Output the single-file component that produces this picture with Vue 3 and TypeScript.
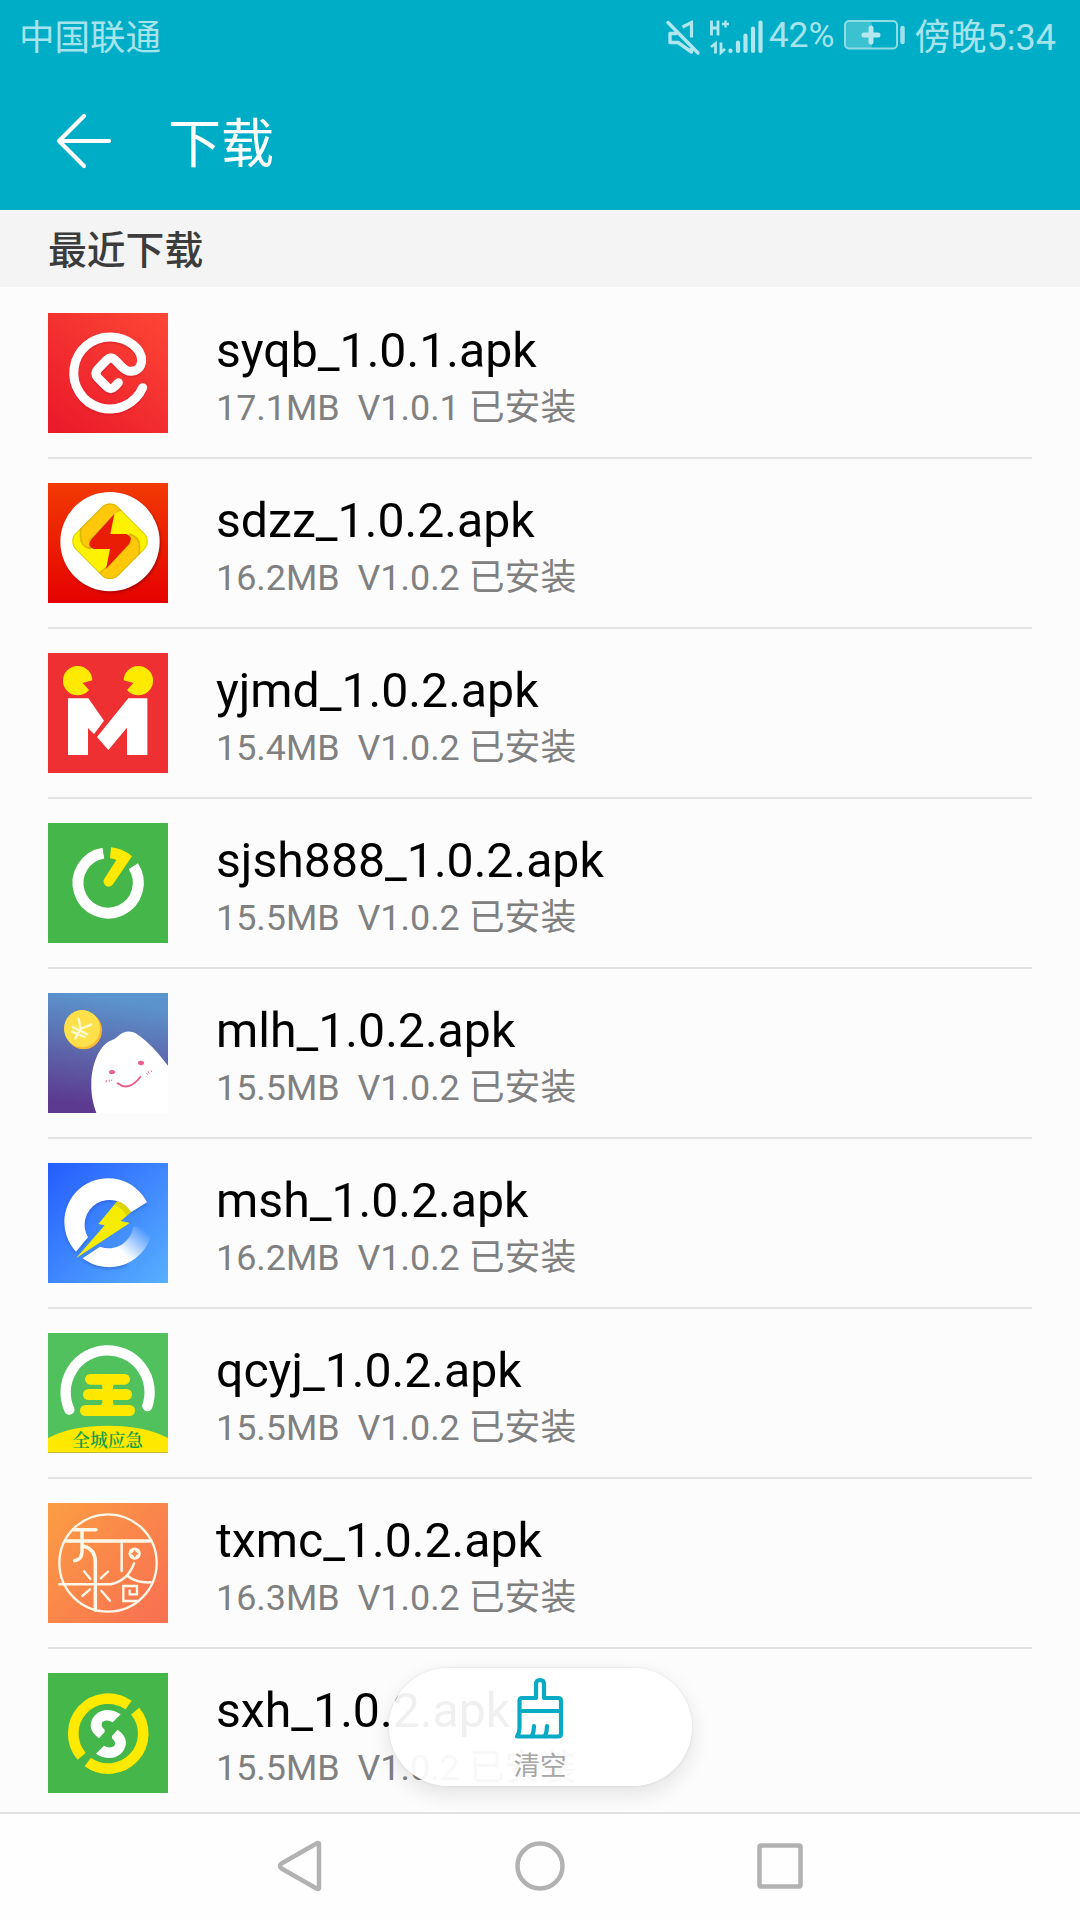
<script setup lang="ts">
interface Download {
  id: string
  name: string
  size: string
  version: string
}

const downloads: Download[] = [
  { id: 'syqb', name: 'syqb_1.0.1.apk', size: '17.1MB', version: 'V1.0.1' },
  { id: 'sdzz', name: 'sdzz_1.0.2.apk', size: '16.2MB', version: 'V1.0.2' },
  { id: 'yjmd', name: 'yjmd_1.0.2.apk', size: '15.4MB', version: 'V1.0.2' },
  { id: 'sjsh', name: 'sjsh888_1.0.2.apk', size: '15.5MB', version: 'V1.0.2' },
  { id: 'mlh', name: 'mlh_1.0.2.apk', size: '15.5MB', version: 'V1.0.2' },
  { id: 'msh', name: 'msh_1.0.2.apk', size: '16.2MB', version: 'V1.0.2' },
  { id: 'qcyj', name: 'qcyj_1.0.2.apk', size: '15.5MB', version: 'V1.0.2' },
  { id: 'txmc', name: 'txmc_1.0.2.apk', size: '16.3MB', version: 'V1.0.2' },
  { id: 'sxh', name: 'sxh_1.0.2.apk', size: '15.5MB', version: 'V1.0.2' },
]
</script>

<template>
  <div class="screen">
    <header class="top">
      <div class="status">
        <span class="carrier">中国联通</span>
        <div class="indicators">
          <svg class="signal" width="100" height="40" viewBox="0 0 100 40" fill="none" stroke="#b0e6ee">
            <path d="M3 5.500 L33 36" stroke-width="3.4" stroke-linecap="round" />
            <path d="M17.500 10 L26.500 5.500 V20.500" stroke-width="3.2" />
            <path d="M12 16.500 H5 V25.500 H13 L26.500 35 V31" stroke-width="3.400" stroke-linejoin="round" />
            <path d="M46.500 3.500 V18.500 M53 3.500 V18.500 M46.500 11 H53" stroke-width="2.800" />
            <path d="M57 7 H64 M60.500 3.500 V10.500" stroke-width="2.400" />
            <path d="M46 30 L50.500 26.500 V36.500 M56 25.500 V35.500 L60 32" stroke-width="2.800" />
            <path d="M65.500 33.500 V34 M73 25.500 V34 M80.500 18.500 V34 M88 11.500 V34 M95.500 5.500 V34" stroke-width="4.200" stroke-linecap="round" />
          </svg>
          <span class="percent">42%</span>
          <svg class="battery" width="64" height="32" viewBox="0 0 64 32" fill="none">
            <rect x="2" y="2.500" width="26" height="27" rx="3" fill="#3cc1d1" />
            <rect x="1" y="2" width="52" height="27.500" rx="4" stroke="#8edce6" stroke-width="2" />
            <path d="M27 9 V23 M20 16 H34" stroke="#b5e9ef" stroke-width="5" stroke-linecap="round" />
            <path d="M58.500 9 V23" stroke="#9fe1ea" stroke-width="4.500" stroke-linecap="round" />
          </svg>
          <span class="time">傍晚5:34</span>
        </div>
      </div>
      <div class="bar">
        <svg width="58" height="58" viewBox="0 0 58 58" fill="none" stroke="#fff" stroke-width="4.200" stroke-linecap="round" stroke-linejoin="round">
          <path d="M54 29 H4 M29 4 L4 29 L29 54" />
        </svg>
        <h1>下载</h1>
      </div>
    </header>

    <h2 class="section">最近下载</h2>

    <ul class="list">
      <li v-for="item in downloads" :key="item.id" class="row">
        <svg v-if="item.id === 'syqb'" class="app" viewBox="0 0 360 360">
          <defs>
            <linearGradient id="g-syqb" x1="0.1" y1="1" x2="0.900" y2="0">
              <stop offset="0" stop-color="#ea1a2a" />
              <stop offset="1" stop-color="#fc4535" />
            </linearGradient>
          </defs>
          <rect width="360" height="360" fill="url(#g-syqb)" />
          <g fill="none" stroke-linecap="round" stroke-linejoin="round" stroke-width="27">
            <path transform="translate(0 6)" opacity="0.25" stroke="#b81020" d="M284 224 A108 108 0 1 1 186 72 C242 72 282 110 281 143 C280 166 264 175 248 175 C233 175 226 166 217 157 L200 140 Q188 129 176 141 L150 168 Q138 180 149 194 L176 221 Q188 233 200 221 L211 209" />
            <path stroke="#fff" d="M284 224 A108 108 0 1 1 186 72 C242 72 282 110 281 143 C280 166 264 175 248 175 C233 175 226 166 217 157 L200 140 Q188 129 176 141 L150 168 Q138 180 149 194 L176 221 Q188 233 200 221 L211 209" />
          </g>
        </svg>

        <svg v-else-if="item.id === 'sdzz'" class="app" viewBox="0 0 360 360">
          <defs>
            <linearGradient id="g-sdzz" x1="0" y1="0" x2="0" y2="1">
              <stop offset="0" stop-color="#f23a04" />
              <stop offset="1" stop-color="#e50200" />
            </linearGradient>
            <clipPath id="c-sdzz"><rect x="96" y="85" width="180" height="180" rx="34" transform="rotate(45 186 175)" /></clipPath>
            <filter id="s-sdzz"><feGaussianBlur stdDeviation="4" /></filter>
          </defs>
          <rect width="360" height="360" fill="url(#g-sdzz)" />
          <circle cx="190" cy="181" r="148" fill="#7d0500" opacity="0.6" filter="url(#s-sdzz)" />
          <circle cx="186" cy="176" r="149" fill="#fff" />
          <g clip-path="url(#c-sdzz)">
            <rect x="60" y="50" width="250" height="250" fill="#fff200" />
            <path d="M230 72 Q208 88 200 96 L126 172 V197 Q92 190 98 146 L98 40 H200Z" fill="#ffc80a" stroke="#b59500" stroke-opacity="0.5" stroke-width="5" />
            <path transform="rotate(180 186 175.500)" d="M230 72 Q208 88 200 96 L126 172 V197 Q92 190 98 146 L98 40 H200Z" fill="#ffc80a" stroke="#b59500" stroke-opacity="0.5" stroke-width="5" />
            <path d="M200 92 L219 82 Q192 115 187 153 H190 Z" fill="#fff200" />
          </g>
          <rect x="97" y="86" width="178" height="178" rx="34" transform="rotate(45 186 175)" fill="none" stroke="#a99300" stroke-opacity="0.4" stroke-width="3" />
          <path d="M199 93 L187 153 H234 Q256 160 244 182 L174 258 L186 198 H137 Q116 190 129 170 Z" fill="#e91c06" />
        </svg>

        <svg v-else-if="item.id === 'yjmd'" class="app" viewBox="0 0 360 360">
          <rect width="360" height="360" fill="#ef3032" />
          <circle cx="89" cy="83" r="44" fill="#fee900" />
          <circle cx="271" cy="83" r="44" fill="#fee900" />
          <path d="M104 90 L136 81 V125 Z M256 90 L224 81 V125 Z" fill="#ef3032" />
          <path d="M60 136 H121 L168 203 L138 243 L120 225 V306 H60 Z M241 136 H298 V306 H237 V224 L181 291 L147 252 Z" fill="#fff" />
        </svg>

        <svg v-else-if="item.id === 'sjsh'" class="app" viewBox="0 0 360 360">
          <rect width="360" height="360" fill="#45b649" />
          <path d="M256 130 A90.500 90.500 0 1 1 166 90.500" fill="none" stroke="#fff" stroke-width="33" />
          <path d="M189 73 Q224 76 252 100 L195 184 A15.500 15.500 0 0 1 169 167 L205 111 Q196 107 186 106 Z" fill="#fee900" />
        </svg>

        <svg v-else-if="item.id === 'mlh'" class="app" viewBox="0 0 360 360">
          <defs>
            <linearGradient id="g-mlh" x1="0.55" y1="0" x2="0.4" y2="1">
              <stop offset="0.05" stop-color="#5b94cd" />
              <stop offset="0.5" stop-color="#5d68ab" />
              <stop offset="0.95" stop-color="#5c3a90" />
            </linearGradient>
          </defs>
          <rect width="360" height="360" fill="url(#g-mlh)" />
          <ellipse cx="107" cy="112" rx="55" ry="57" fill="#f8b934" />
          <ellipse cx="102" cy="107" rx="54" ry="56" fill="#fde04a" />
          <g fill="none" stroke="#fffad0" stroke-width="7" stroke-linecap="round">
            <path d="M92 78 L98 108 L82 136 M98 108 L130 94 M74 102 L118 124 M72 116 L110 132" />
          </g>
          <path d="M145 360 C133 325 129 300 130 268 C132 215 151 164 184 145 Q199 141 210 130 C224 115 247 111 265 122 C300 145 333 181 360 218 V360 Z" fill="#fff" />
          <ellipse cx="192" cy="237" rx="9" ry="6" fill="#ea5e8c" />
          <ellipse cx="279" cy="210" rx="9" ry="6.500" fill="#ea5e8c" />
          <path d="M209 271 Q241 297 277 252" fill="none" stroke="#ea5e8c" stroke-width="6" stroke-linecap="round" />
          <path d="M176 262 L175 267 M184 261 V265 M191 261 V263 M296 241 L298 244 M301 236 L303 241 M309 233 L311 236" stroke="#e7779d" stroke-width="3" stroke-linecap="round" />
        </svg>

        <svg v-else-if="item.id === 'msh'" class="app" viewBox="0 0 360 360">
          <defs>
            <linearGradient id="g-msh" x1="0" y1="0" x2="1" y2="1">
              <stop offset="0" stop-color="#245cfe" />
              <stop offset="1" stop-color="#58b0ff" />
            </linearGradient>
            <linearGradient id="f-msh" gradientUnits="userSpaceOnUse" x1="225" y1="270" x2="290" y2="200">
              <stop offset="0" stop-color="#fff" />
              <stop offset="1" stop-color="#fff" stop-opacity="0" />
            </linearGradient>
            <filter id="s-msh"><feGaussianBlur stdDeviation="4" /></filter>
          </defs>
          <rect width="360" height="360" fill="url(#g-msh)" />
          <path transform="translate(0 5)" d="M297 118 A131 131 0 1 0 84 266 L120 223 A74 74 0 1 1 249 148 Z M104 286 A131 131 0 0 0 240 300 L200 255 L156 251 Z" fill="#1643a8" opacity="0.4" filter="url(#s-msh)" />
          <path d="M297 118 A131 131 0 1 0 84 266 L120 223 A74 74 0 1 1 249 148 Z" fill="#fff" />
          <path d="M104 286 A131 131 0 0 0 313 200 L256 190 A74 74 0 0 1 156 251 Z" fill="url(#f-msh)" />
          <path d="M208 114 Q234 122 249 148 L218 174 L245 180 L84 286 L170 187 L151 183 Z" fill="#f5ec00" />
          <path d="M208 114 Q234 122 249 148 L236 159 Q226 137 199 125 Z" fill="#b5ac00" opacity="0.35" />
        </svg>

        <svg v-else-if="item.id === 'qcyj'" class="app" viewBox="0 0 360 360">
          <rect width="360" height="360" fill="#51c15e" />
          <path d="M64 230 A126 126 0 1 1 298 219" fill="none" stroke="#fff" stroke-width="31" stroke-linecap="round" />
          <g fill="#fee800">
            <rect x="111" y="123" width="135" height="32" rx="16" />
            <rect x="105" y="168" width="147" height="33" rx="16.500" />
            <rect x="96" y="216" width="165" height="33" rx="16.500" />
            <path d="M156 150 H202 Q195 156 195 162 V208 Q195 214 202 220 H156 Q163 214 163 208 V162 Q163 156 156 150 Z" />
            <path d="M0 315 Q70 278 180 278 Q290 278 360 315 V360 H0 Z" />
          </g>
          <path d="M0 358.500 H360" stroke="#c1b840" stroke-width="3" />
          <text x="179" y="341" text-anchor="middle" font-size="53" class="badge-text">全城应急</text>
        </svg>

        <svg v-else-if="item.id === 'txmc'" class="app" viewBox="0 0 360 360">
          <defs>
            <linearGradient id="g-txmc" x1="0" y1="0" x2="1" y2="0.9">
              <stop offset="0.05" stop-color="#fb9b43" />
              <stop offset="0.95" stop-color="#f97351" />
            </linearGradient>
          </defs>
          <rect width="360" height="360" fill="url(#g-txmc)" />
          <g fill="none" stroke="#fff7e8" stroke-linecap="round">
            <circle cx="180" cy="180" r="146" stroke-width="7" />
            <path d="M78 80 H144 M54 114 H306" stroke-width="10.500" />
            <path d="M102 80 V145 Q102 170 80 173 M106 129 Q142 139 142 177 V322" stroke-width="10.500" />
            <path d="M34 244 H188 Q240 232 258 181 M238 218 Q265 240 308 238 M221 116 V204" stroke-width="7.500" />
            <path d="M108 205 L127 228 M180 206 L158 226 M103 279 L126 259 M160 263 L186 293" stroke-width="7" />
            <path d="M272 294 H226 V249 H267 V274 H245 V262" stroke-width="7" />
          </g>
          <circle cx="260" cy="152" r="18.500" fill="#fff7e8" />
          <path d="M260 140 Q263 149 272 152 Q263 155 260 164 Q257 155 248 152 Q257 149 260 140 Z" fill="#f88a4b" />
        </svg>

        <svg v-else class="app" viewBox="0 0 360 360">
          <rect width="360" height="360" fill="#45b649" />
          <path d="M101 250.100 A105 105 0 0 1 241.700 96.300 M261.400 114.500 A105 105 0 0 1 119.300 266.900" fill="none" stroke="#fee900" stroke-width="32" />
          <g fill="#fff">
            <path d="M218 124 L194 148 Q178 138 163 147 Q156 158 170 170 V177 L153 196 Q128 178 128 157 C130 120 174 94 218 124 Z" />
            <path transform="rotate(180 181 183)" d="M218 124 L194 148 Q178 138 163 147 Q156 158 170 170 V177 L153 196 Q128 178 128 157 C130 120 174 94 218 124 Z" />
          </g>
        </svg>

        <div class="info">
          <span class="name">{{ item.name }}</span>
          <span class="meta">{{ item.size }}&nbsp; {{ item.version }} 已安装</span>
        </div>
      </li>
    </ul>

    <button class="clear" type="button">
      <svg width="52" height="64" viewBox="0 0 52 64" fill="none" stroke="#08abc3" stroke-width="4.200" stroke-linecap="round" stroke-linejoin="round">
        <path d="M22 22 V8 Q22 4 26 4 Q30 4 30 8 V22 H44 Q47 22 47 25 V58 Q47 60.500 44 60.500 H3 Q5.500 57 5.500 52 V25 Q5.500 22 8 22 Z" />
        <path d="M6 35 H47 M20 50 Q20 56 18 60 M33 50 Q33 56 31 60" />
      </svg>
      <span>清空</span>
    </button>

    <nav class="nav">
      <svg width="52" height="52" viewBox="0 0 52 52"><path d="M45 3.500 V48.500 Q44 49.500 42.500 48.500 L7.500 28.500 Q4.500 26 7.500 23.500 L42.500 3.500 Q44 2.500 45 3.500 Z" /></svg>
      <svg width="52" height="52" viewBox="0 0 52 52"><circle cx="26" cy="26" r="22.500" /></svg>
      <svg width="52" height="52" viewBox="0 0 52 52"><rect x="5.500" y="5.500" width="41" height="41" rx="1.500" /></svg>
    </nav>
  </div>
</template>

<style>
body {
  margin: 0;
  background: #fcfcfc;
}
</style>

<style scoped>
.screen {
  position: relative;
  display: flex;
  flex-direction: column;
  width: 1080px;
  height: 1920px;
  overflow: hidden;
  background: #fcfcfc;
  font-family: Roboto, "Noto Sans CJK SC", sans-serif;
}
.top {
  height: 210px;
  background: #00adc6;
}
.status {
  display: flex;
  justify-content: space-between;
  height: 72px;
  padding: 0 24px 0 19px;
  color: #a6e3ec;
  font-size: 35.5px;
  font-weight: 400;
  line-height: 72px;
  white-space: nowrap;
}
.carrier {
  margin-top: 2px;
}
.indicators {
  display: flex;
}
.signal {
  margin-top: 17px;
}
.percent {
  margin: -1px 0 0 4px;
}
.battery {
  margin: 19px 0 0 9px;
}
.time {
  margin: 2px 0 0 7px;
  font-size: 36px;
}
.bar {
  display: flex;
  align-items: center;
  gap: 55px;
  height: 138px;
  padding-left: 55px;
}
.bar h1 {
  margin: 8px 0 0;
  color: #fff;
  font-size: 53px;
  font-weight: 400;
  line-height: 72px;
}
.section {
  height: 77px;
  margin: 0;
  padding-left: 48px;
  background: #f4f4f4;
  color: #3c3c3c;
  font-size: 38.8px;
  font-weight: 500;
  line-height: 81px;
}
.list {
  flex: 1;
  min-height: 0;
  margin: 0;
  padding: 2px 48px 0;
  overflow: hidden;
  list-style: none;
}
.row {
  display: flex;
  gap: 48px;
  height: 120px;
  padding: 24px 0;
  border-bottom: 2px solid #e2e2e2;
}
.app {
  flex: none;
  width: 120px;
  height: 120px;
}
.badge-text {
  fill: #12a04a;
  font-family: "Noto Serif CJK SC", "Noto Sans CJK SC", serif;
  font-weight: 600;
}
.info {
  display: flex;
  flex-direction: column;
  padding-top: 10px;
  white-space: nowrap;
}
.name {
  color: #000;
  font-size: 48.2px;
  line-height: 56px;
}
.meta {
  color: #808080;
  font-size: 35.9px;
  font-weight: 400;
  line-height: 58px;
}
.clear {
  position: absolute;
  top: 1668px;
  left: 389px;
  display: flex;
  flex-direction: column;
  align-items: center;
  width: 303px;
  height: 118px;
  padding: 8px 1px 0 0;
  border: 0;
  border-radius: 60px;
  background: rgba(255, 255, 255, 0.94);
  box-shadow: 0 8px 22px rgba(0, 0, 0, 0.1), 0 0 3px rgba(0, 0, 0, 0.1);
  color: #a6a6a6;
  font-family: inherit;
  font-size: 26.5px;
  font-weight: 400;
  line-height: 40px;
}
.clear svg {
  flex: none;
}
.clear span {
  margin-top: 6px;
}
.nav {
  display: flex;
  justify-content: center;
  gap: 188px;
  box-sizing: border-box;
  height: 108px;
  padding-top: 26px;
  border-top: 2px solid #e2e2e2;
  background: #fefefe;
  position: relative;
}
.nav svg {
  fill: none;
  stroke: #b2b2b2;
  stroke-width: 4.5;
  stroke-linejoin: round;
}
</style>
